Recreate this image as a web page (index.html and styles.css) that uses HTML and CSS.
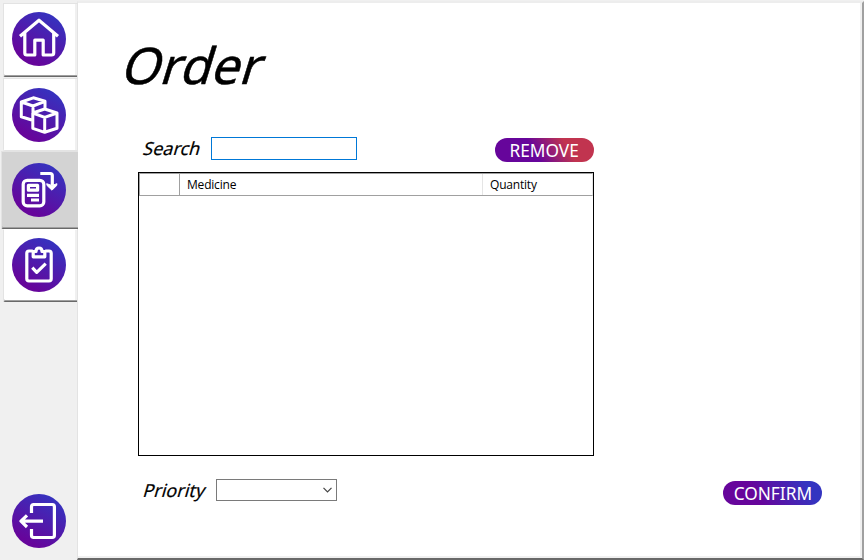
FILE: index.html
```html
<!DOCTYPE html>
<html lang="en">
<head>
<meta charset="utf-8">
<title>Order</title>
<link rel="stylesheet" href="styles.css">
</head>
<body>
<svg class="defs" aria-hidden="true"><defs><linearGradient id="disc" x1="0.3" y1="1" x2="0.85" y2="0.08"><stop offset="0.1" stop-color="#66059b"/><stop offset="1" stop-color="#3434c0"/></linearGradient></defs></svg>
<nav class="sidebar">
  <button class="tab" aria-label="Home"><svg class="icon" viewBox="0 0 54 54"><circle cx="27" cy="27" r="27" fill="url(#disc)"/><path d="M8 24.2 27 8.2 46 24.2M12.8 21V41Q12.8 43 14.8 43H22.8V28.2H31.2V43H39.5Q41.7 43 41.7 41V21"/></svg></button>
  <button class="tab" aria-label="Stock"><svg class="icon boxes" viewBox="0 0 54 54"><circle cx="27" cy="27" r="27" fill="url(#disc)"/><path d="M33 20V13.3L21.3 9.8 9.3 14V28.7L20.5 32.2M9.3 14 21 18 33 13.3M21 18V25M32.7 21 45 25V40.3L32.7 44.3 20.8 40.3V25ZM20.8 25 32.7 29.3 45 25M32.7 29.3V44"/></svg></button>
  <button class="tab active" aria-label="Order"><svg class="icon" viewBox="0 0 54 54"><circle cx="27" cy="27" r="27" fill="url(#disc)"/><rect x="11.2" y="17.3" width="20.6" height="25.6" rx="4"/><path d="M16.4 22.4H25.6V27.2H16.4ZM15 32.3H27M19 37H27M28.3 10.5H38.3Q40.3 10.5 40.3 12.5V22"/><path class="solid" d="M34.7 20.7 40 22.5 45 20.7 44.5 22.7 40 27.2 35.2 22.7Z"/></svg></button>
  <button class="tab" aria-label="Checklist"><svg class="icon" viewBox="0 0 54 54"><circle cx="27" cy="27" r="27" fill="url(#disc)"/><path d="M20.8 13H17Q14.8 13 14.8 15.2V40.8Q14.8 43 17 43H37Q39.2 43 39.2 40.8V15.2Q39.2 13 37 13H33.2M21.2 18.8V13.5H24Q24 10 27 10T30 13.5H32.8V18.8ZM20.3 29.7 24.7 34.3 33.7 25.7"/></svg></button>
  <button class="exit" aria-label="Log out"><svg class="icon" viewBox="0 0 54 54"><circle cx="27" cy="27" r="27" fill="url(#disc)"/><path d="M19.5 19V12.7Q19.5 10.5 21.7 10.5H40.2Q42.4 10.5 42.4 12.7V41.3Q42.4 43.5 40.2 43.5H21.7Q19.5 43.5 19.5 41.3V35M31 27.2H9M15 21.3 9 27.2 15 33"/></svg></button>
</nav>
<main class="panel">
  <h1 class="title">Order</h1>
  <div class="toolbar">
    <label class="label" for="search">Search</label>
    <input class="search" id="search">
    <button class="pill remove"><span class="caption">REMOVE</span></button>
  </div>
  <div class="list">
    <div class="head"><span></span><span class="cell medicine">Medicine</span><span class="cell quantity">Quantity</span></div>
  </div>
  <div class="footer">
    <span class="label">Priority</span>
    <button class="combo" aria-label="Priority"><svg class="chevron" viewBox="0 0 9 6"><path d="M.5 .8 4.5 4.8 8.5 .8"/></svg></button>
    <button class="pill confirm"><span class="caption">CONFIRM</span></button>
  </div>
</main>
</body>
</html>
```
FILE: styles.css
```css
* { box-sizing: border-box; }
body { margin: 0; height: 560px; display: grid; grid-template-columns: 77px 787px; background: #f0f0f0; color: #000; font-family: "Noto Sans", sans-serif; overflow: hidden; }
button { padding: 0; border: 0; background: none; font: inherit; }
.defs { position: absolute; width: 0; height: 0; }

.sidebar { display: flex; flex-direction: column; padding: 3px 0 12px 3px; z-index: 1; }
.tab { display: flex; align-items: flex-start; width: 74px; height: 74px; padding: 8px 0 0 8px; background: #fff; border: 1px solid #e3e3e3; border-right: 0; border-bottom: 1px solid #696969; box-shadow: inset 0 -1px #a0a0a0, inset -2px 0 #f0f0f0; border-bottom-left-radius: 2px; flex: none; }
.tab:nth-child(2) { margin-top: 1px; border-bottom-color: #e3e3e3; box-shadow: inset -2px 0 #f0f0f0; height: 73px; padding-top: 9px; }
.tab.active { width: 77px; height: 78px; margin-left: -2px; padding: 11px 0 0 10px; background: #d3d3d3; box-shadow: inset 0 -1px #a0a0a0; }
.tab:nth-child(4) { height: 73px; padding-top: 8px; border-top-color: #fff; }
.exit { margin: auto 0 0 9px; width: 54px; height: 54px; }
.icon { display: block; width: 54px; height: 54px; flex: none; }
.icon path, .icon rect { fill: none; stroke: #fff; stroke-width: 3.2; stroke-linejoin: round; }
.boxes path { stroke-width: 3; }
.icon .solid { fill: #fff; stroke-width: 1; }

.panel { margin-top: 1px; background: #fff; border: solid; border-width: 2px 2px 2px 1px; border-color: #ededed #a0a0a0 #696969 #e3e3e3; box-shadow: inset -2px -2px #f0f0f0; padding-left: 42px; }
.title { margin: 26px 0 0; height: 72px; font-size: 50.5px; line-height: 72px; font-weight: 400; -webkit-text-stroke: .5px #000; transform: translateX(-1px) skewX(-17deg); transform-origin: 0 76%; width: 140px; }
.toolbar { display: flex; height: 26px; margin: 36px 0 0 22px; }
.label { width: 60px; margin-right: 9px; font-size: 18px; line-height: 22px; -webkit-text-stroke: .2px #000; transform: translateX(-.5px) skewX(-16deg); transform-origin: 0 76%; }
.search { width: 146px; height: 23px; margin: 0; padding: 0 4px; border: 1px solid #0078d7; border-radius: 0; background: #fff; outline: 0; }
.pill { display: flex; justify-content: center; align-items: center; width: 99px; height: 24px; border-radius: 12px; color: #fff; }
.remove { margin: 1px 0 0 138px; background: linear-gradient(60deg, #66059b 40%, #c1344f 72%); }
.caption { font-size: 18px; line-height: 23px; transform: scaleX(.96); }
.list { width: 456px; height: 284px; margin: 9px 0 0 18px; border: 1px solid #000; background: #fff; }
.head { display: grid; grid-template-columns: 40px 302px 1fr; height: 23px; border: 1px solid #a0a0a0; border-right-color: #e5e5e5; font-family: "Open Sans", sans-serif; font-size: 12px; letter-spacing: -.2px; line-height: 21px; }
.cell { padding-left: 7px; border-left: 1px solid #e5e5e5; }
.medicine { margin-left: -1px; border-color: #a0a0a0; }
.footer { display: flex; height: 30px; margin: 22px 0 0 22px; }
.footer .label { width: 65px; line-height: 24px; transform: translateX(-1px) skewX(-16deg); }
.combo { width: 121px; height: 22px; margin-top: 1px; border: 1px solid #7a7a7a; background: #fff; display: flex; justify-content: flex-end; align-items: center; padding-right: 4px; }
.chevron { width: 9px; height: 6px; fill: none; stroke: #444; stroke-width: 1.2; }
.confirm { margin: 3px 0 0 386px; background: linear-gradient(60deg, #66059b 35%, #3434c0 85%); }
```
